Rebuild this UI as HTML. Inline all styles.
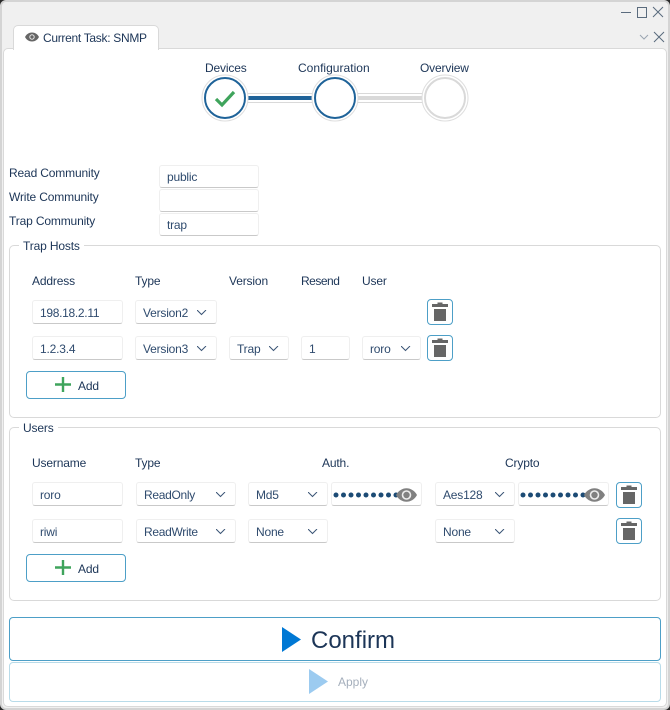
<!DOCTYPE html>
<html><head><meta charset="utf-8">
<style>
html,body{margin:0;padding:0;background:#f0f0f0}
#r{position:relative;width:670px;height:710px;overflow:hidden;background:#2a2a2a;font:12px "Liberation Sans",sans-serif;color:#1c3557}
#r div,#r svg{position:absolute;box-sizing:border-box}
.t{white-space:nowrap;line-height:16px;height:16px;letter-spacing:-.15px}
.f{background:#fff;border:1px solid #efefef;border-bottom:1px solid #c9c9c9;border-radius:3px;padding-left:7px;line-height:24px;color:#2f4b6e;white-space:nowrap;letter-spacing:-.2px}
.g{border:1px solid #d9d9d9;border-radius:5px;background:#fff}
.l{background:#fff;padding:0 4px;line-height:16px;height:16px;color:#1c3557;letter-spacing:-.15px}
.b{background:#fff;border:1px solid #4d9fc7;border-radius:4px}
</style></head><body>
<div id="r">
<svg width="0" height="0" style="position:absolute"><defs>
<g id="ch"><path d="M0 0L4.500 4.500L9 0" fill="none" stroke="#3a5475" stroke-width="1"/></g>
<g id="tr"><rect x="4" y="5" width="16" height="3" fill="#666"/><rect x="9.500" y="3.500" width="5" height="2" fill="#666"/><rect x="6" y="10" width="12" height="12" fill="#666"/></g>
<g id="eye"><path d="M0 7C5 -2 16 -2 21 7C16 16 5 16 0 7Z" fill="#808080"/><circle cx="10.500" cy="7" r="4.800" fill="#ececec"/><circle cx="10.500" cy="7" r="3.200" fill="#808080"/></g>
<g id="dots" fill="#1c4b75"><circle cx="3" cy="3" r="2.500"/><circle cx="10.500" cy="3" r="2.500"/><circle cx="18" cy="3" r="2.500"/><circle cx="25.500" cy="3" r="2.500"/><circle cx="33" cy="3" r="2.500"/><circle cx="40.500" cy="3" r="2.500"/><circle cx="48" cy="3" r="2.500"/><circle cx="55.500" cy="3" r="2.500"/><circle cx="63" cy="3" r="2.500"/></g>
<g id="pl"><path d="M8 0V15M0 7.500H16" stroke="#3fa45c" stroke-width="2.400" fill="none"/></g>
</defs></svg>

<div style="left:0;top:0;width:670px;height:710px;background:#f0f0f0;border:2px solid #d4d4d4;border-radius:6px"></div>
<div style="left:3px;top:48px;width:664px;height:659px;background:#fff;border:1px solid #d9d9d9;border-radius:5px"></div>
<div style="left:13px;top:25px;width:146px;height:25px;background:#fff;border:1px solid #d9d9d9;border-bottom:0;border-radius:5px 5px 0 0"></div>
<svg style="left:25px;top:32px" width="14" height="10" viewBox="0 0 14 10"><path d="M0 5C3 -1 11 -1 14 5C11 11 3 11 0 5Z" fill="#666"/><circle cx="7" cy="5" r="2.700" fill="#e8e8e8"/><circle cx="7" cy="5" r="1.700" fill="#666"/></svg>
<div class="t" style="left:43px;top:30px;font-size:12px;color:#1c3557;letter-spacing:-.3px">Current Task: SNMP</div>

<svg style="left:620px;top:5px" width="48" height="38" viewBox="0 0 48 38" fill="none" stroke="#5a6b7d" stroke-width="1"><path d="M1 7.500H11"/><rect x="17.500" y="2.500" width="9" height="10"/><path d="M33 2L43 12M43 2L33 12"/><path d="M20 30L24 34L28 30" stroke="#9aa5b1"/><path d="M34 27L44 37M44 27L34 37"/></svg>

<!-- stepper -->
<div class="t" style="left:205px;top:60px">Devices</div>
<div class="t" style="left:298px;top:60px;letter-spacing:.02px">Configuration</div>
<div class="t" style="left:420px;top:60px">Overview</div>
<svg style="left:195px;top:70px" width="280" height="56" viewBox="0 0 280 56">
<rect x="50.500" y="23.500" width="70" height="9" fill="#fff" stroke="#d9d9d9"/>
<rect x="160.500" y="23.500" width="70" height="9" fill="#fff" stroke="#d9d9d9"/>
<rect x="50" y="26" width="70" height="4" fill="#1f6399"/>
<rect x="160" y="26" width="70" height="4" fill="#d9d9d9"/>
<circle cx="30" cy="28" r="23" fill="#fff" stroke="#dedede"/>
<circle cx="140" cy="28" r="23" fill="#fff" stroke="#dedede"/>
<circle cx="250" cy="28" r="23" fill="#fff" stroke="#dedede"/>
<circle cx="30" cy="28" r="20" fill="#fff" stroke="#1f6399" stroke-width="2"/>
<circle cx="140" cy="28" r="20" fill="#fff" stroke="#1f6399" stroke-width="2"/>
<circle cx="250" cy="28" r="20" fill="#fff" stroke="#d9d9d9" stroke-width="2"/>
<path d="M21 29L27 35L39 22" fill="none" stroke="#3fa45c" stroke-width="3.200"/>
</svg>

<!-- community -->
<div class="t" style="left:9px;top:165px">Read Community</div>
<div class="t" style="left:9px;top:189px">Write Community</div>
<div class="t" style="left:9px;top:213px">Trap Community</div>
<div class="f" style="left:159px;top:165px;width:100px;height:23px;line-height:22px">public</div>
<div class="f" style="left:159px;top:189px;width:100px;height:23px"></div>
<div class="f" style="left:159px;top:213px;width:100px;height:23px;line-height:22px">trap</div>

<!-- trap hosts -->
<div class="g" style="left:9px;top:245px;width:652px;height:173px"></div>
<div class="l" style="left:19px;top:238px">Trap Hosts</div>
<div class="t" style="left:32px;top:273px">Address</div>
<div class="t" style="left:135px;top:273px">Type</div>
<div class="t" style="left:229px;top:273px">Version</div>
<div class="t" style="left:301px;top:273px;letter-spacing:-.5px">Resend</div>
<div class="t" style="left:362px;top:273px">User</div>

<div class="f" style="left:32px;top:300px;width:91px;height:24px;letter-spacing:-.3px">198.18.2.11</div>
<div class="f" style="left:135px;top:300px;width:82px;height:24px">Version2</div>
<svg style="left:197px;top:310px" width="10" height="6"><use href="#ch"/></svg>
<div class="b" style="left:427px;top:299px;width:26px;height:26px"></div>
<svg style="left:428px;top:299px" width="24" height="26"><use href="#tr"/></svg>

<div class="f" style="left:32px;top:336px;width:91px;height:24px">1.2.3.4</div>
<div class="f" style="left:135px;top:336px;width:82px;height:24px">Version3</div>
<svg style="left:197px;top:346px" width="10" height="6"><use href="#ch"/></svg>
<div class="f" style="left:229px;top:336px;width:60px;height:24px">Trap</div>
<svg style="left:269px;top:346px" width="10" height="6"><use href="#ch"/></svg>
<div class="f" style="left:301px;top:336px;width:49px;height:24px">1</div>
<div class="f" style="left:362px;top:336px;width:59px;height:24px">roro</div>
<svg style="left:401px;top:346px" width="10" height="6"><use href="#ch"/></svg>
<div class="b" style="left:427px;top:335px;width:26px;height:26px"></div>
<svg style="left:428px;top:335px" width="24" height="26"><use href="#tr"/></svg>

<div class="b" style="left:26px;top:371px;width:100px;height:28px"></div>
<svg style="left:55px;top:377px" width="16" height="16"><use href="#pl"/></svg>
<div class="t" style="left:78px;top:378px">Add</div>

<!-- users -->
<div class="g" style="left:9px;top:427px;width:652px;height:174px"></div>
<div class="l" style="left:19px;top:420px">Users</div>
<div class="t" style="left:32px;top:455px">Username</div>
<div class="t" style="left:135px;top:455px">Type</div>
<div class="t" style="left:322px;top:455px">Auth.</div>
<div class="t" style="left:505px;top:455px">Crypto</div>

<div class="f" style="left:32px;top:482px;width:91px;height:24px">roro</div>
<div class="f" style="left:136px;top:482px;width:100px;height:24px;letter-spacing:-.3px">ReadOnly</div>
<svg style="left:216px;top:492px" width="10" height="6"><use href="#ch"/></svg>
<div class="f" style="left:248px;top:482px;width:80px;height:24px">Md5</div>
<svg style="left:308px;top:492px" width="10" height="6"><use href="#ch"/></svg>
<div class="f" style="left:331px;top:482px;width:91px;height:24px"></div>
<svg style="left:333px;top:492px" width="66" height="6"><use href="#dots"/></svg>
<svg style="left:396px;top:488px" width="22" height="14"><use href="#eye"/></svg>
<div class="f" style="left:435px;top:482px;width:80px;height:24px">Aes128</div>
<svg style="left:495px;top:492px" width="10" height="6"><use href="#ch"/></svg>
<div class="f" style="left:518px;top:482px;width:91px;height:24px"></div>
<svg style="left:520px;top:492px" width="66" height="6"><use href="#dots"/></svg>
<svg style="left:584px;top:488px" width="22" height="14"><use href="#eye"/></svg>
<div class="b" style="left:616px;top:482px;width:26px;height:26px"></div>
<svg style="left:617px;top:482px" width="24" height="26"><use href="#tr"/></svg>

<div class="f" style="left:32px;top:519px;width:91px;height:24px">riwi</div>
<div class="f" style="left:136px;top:519px;width:100px;height:24px;letter-spacing:-.3px">ReadWrite</div>
<svg style="left:216px;top:529px" width="10" height="6"><use href="#ch"/></svg>
<div class="f" style="left:248px;top:519px;width:80px;height:24px">None</div>
<svg style="left:308px;top:529px" width="10" height="6"><use href="#ch"/></svg>
<div class="f" style="left:435px;top:519px;width:80px;height:24px">None</div>
<svg style="left:495px;top:529px" width="10" height="6"><use href="#ch"/></svg>
<div class="b" style="left:616px;top:518px;width:26px;height:26px"></div>
<svg style="left:617px;top:518px" width="24" height="26"><use href="#tr"/></svg>

<div class="b" style="left:26px;top:554px;width:100px;height:28px"></div>
<svg style="left:55px;top:560px" width="16" height="16"><use href="#pl"/></svg>
<div class="t" style="left:78px;top:561px">Add</div>

<!-- actions -->
<div class="b" style="left:9px;top:617px;width:652px;height:44px"></div>
<svg style="left:282px;top:627px" width="19" height="25"><path d="M0 0L19 12.500L0 25Z" fill="#0078d4"/></svg>
<div class="t" style="left:311px;top:627px;font-size:24px;line-height:28px;height:28px;color:#1c3557;letter-spacing:0">Confirm</div>
<div class="b" style="left:9px;top:662px;width:652px;height:40px;border-color:#b8dbe9"></div>
<svg style="left:309px;top:669px" width="19" height="25"><path d="M0 0L19 12.500L0 25Z" fill="#9ccbf0"/></svg>
<div class="t" style="left:338px;top:674px;color:#a5afbc;letter-spacing:0">Apply</div>
</div>
</body></html>
